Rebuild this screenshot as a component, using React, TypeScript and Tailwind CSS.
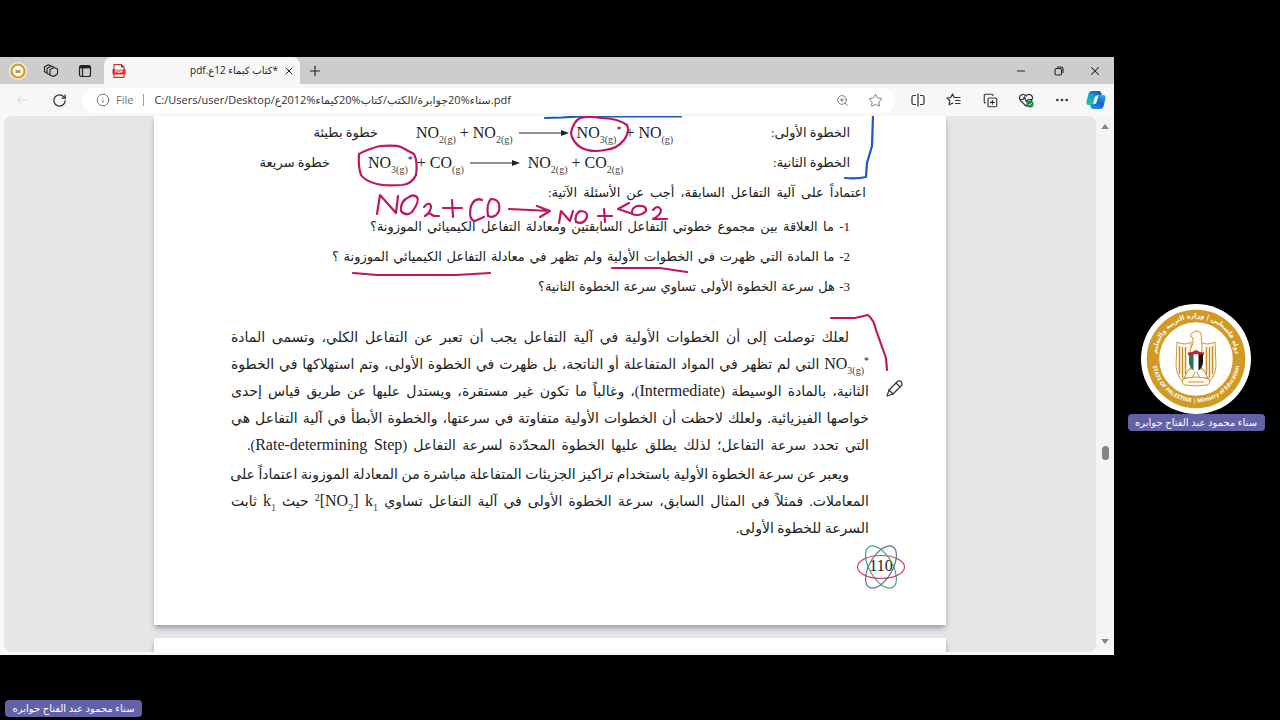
import type { ReactNode } from 'react'
import {
  ArrowLeft,
  CopyPlus,
  Ellipsis,
  Info,
  Minus,
  Plus,
  RotateCw,
  Star,
  X,
  ZoomIn,
} from 'lucide-react'

const PRESENTER = 'سناء محمود عبد الفتاح جوابره'

const questions = [
  { text: '1- ما العلاقة بين مجموع خطوتي التفاعل السابقتين ومعادلة التفاعل الكيميائي الموزونة؟', width: 'w-[480px]' },
  { text: '2- ما المادة التي ظهرت في الخطوات الأولية ولم تظهر في معادلة التفاعل الكيميائي الموزونة ؟', width: 'w-[518px]' },
  { text: '3- هل سرعة الخطوة الأولى تساوي سرعة الخطوة الثانية؟', width: 'w-[312px]' },
]

function NameTag() {
  return (
    <div dir="rtl" className="w-[137px] h-[17px] rounded-sm bg-[#6362a6] text-white text-[10px] leading-4 text-center whitespace-nowrap">
      {PRESENTER}
    </div>
  )
}

function IconButton({ label, className = '', children }: { label: string; className?: string; children: ReactNode }) {
  return (
    <button type="button" aria-label={label} className={`flex items-center justify-center h-6 shrink-0 ${className}`}>
      {children}
    </button>
  )
}

function Emblem({ className }: { className: string }) {
  return (
    <svg viewBox="0 0 110 110" className={className}>
      <defs>
        <path id="ringTop" d="M18 67 A39.500 39.500 0 1 1 92 67" />
        <path id="ringBottom" d="M12 45 A44 44 0 1 0 98 45" />
      </defs>
      <circle cx="55" cy="55" r="55" fill="#fff" />
      <circle cx="55" cy="55" r="43" fill="none" stroke="#d29a22" strokeWidth="12.500" />
      <text fill="#fff" fontSize="6.400" fontFamily="DejaVu Sans, sans-serif" fontWeight="700" textAnchor="middle" direction="rtl">
        <textPath href="#ringTop" startOffset="50%">دولة فلسطين | وزارة التربية والتعليم</textPath>
      </text>
      <text fill="#fff" fontSize="5.600" fontFamily="Open Sans, sans-serif" fontWeight="700" textAnchor="middle">
        <textPath href="#ringBottom" startOffset="50%">STATE OF PALESTINE | Ministry of Education</textPath>
      </text>
      {/* eagle */}
      <g fill="#fffaf0" stroke="#c08e25" strokeWidth="0.9" strokeLinejoin="round">
        <path d="M50 38 Q44 42 36 38 L35 62 Q36 72 41 77 L51 62 Z" />
        <path d="M60 38 Q66 42 74 38 L75 62 Q74 72 69 77 L59 62 Z" />
        <path d="M38.500 42 V70 M41.500 43 V74 M44.500 43 V70 M71.500 42 V70 M68.500 43 V74 M65.500 43 V70" strokeWidth="1.400" fill="none" />
        <path d="M49 46 Q53 40 52 34 L49 32 L51 29 Q55 25 60 29 Q61 37 61 46 L58 66 H52 Z" />
        <path d="M48 65 L43 74 H51 L55 66 L59 74 H67 L62 65 Z" />
        <path d="M42 75 Q55 71 68 75 Q70 80 66 81 Q55 83 44 81 Q40 80 42 75 Z" />
        <path d="M47 78 H63" fill="none" />
      </g>
      <path d="M48 49 H62 V58 Q61 65 55 68 Q49 65 48 58 Z" fill="#fff" />
      <path d="M48 49 H52.500 V66.500 Q48 63 48 58 Z" fill="#26735a" />
      <path d="M57.500 49 H62 V58 Q62 63 57.500 66.500 Z" fill="#161616" />
      <path d="M47 48.500 Q51 48.500 55 46 Q59 48.500 63 48.500 V51 L55 50 L47 51 Z" fill="#c91f2b" />
    </svg>
  )
}

function Ink() {
  return (
    <svg viewBox="154 116 792 509" className="absolute inset-0 w-full h-full pointer-events-none" fill="none" strokeWidth="2.200" strokeLinecap="round" strokeLinejoin="round">
      <g stroke="#1c58bd">
        <path d="M545 118 L562 117.500 L580 116.500 M580 116.500 H681" />
        <path d="M873 116 L872 146 L867 163 L866 177 Q858 179 845 178" />
      </g>
      <g stroke="#bd1762">
        <path d="M580 118 Q573 122 571 133 Q572 141 580 147 Q590 153 605 150 Q617 149 624 140 Q630 132 627 125 Q617 118 601 118 Q590 116 580 118 Z" />
        <path d="M359 154 Q368 149 380 146 Q396 145 401 147 L414 154 Q418 162 416 175 Q412 184 402 185 Q384 186 377 184 Q365 181 361 175 Q358 167 359 154 Z" />
        <path d="M377 214 L380 195 L396 213 L398 196" />
        <path d="M409 197 Q400 201 401 211 Q406 217 412 212 Q420 201 417 197 Q413 194 409 197 Z" />
        <path d="M424 207 Q429 201 431 206 Q431 212 425 216 M425 216 L429 213 L434 216 L439 216" />
        <path d="M443 208 H462 M452 200 L453 217" />
        <path d="M482 200 Q475 197 471 206 Q468 220 475 221 L484 217" />
        <path d="M491 199 Q486 204 488 216 Q495 219 499 211 Q501 199 491 199 Z" />
        <path d="M509 209 L550 211 M537 206 L550 211 L540 217" />
        <path d="M559 223 L561 211 L570 221 L573 211" />
        <path d="M580 211 Q574 215 576 222 Q584 225 587 217 Q588 211 580 211 Z" />
        <path d="M598 216 H612 M604 209 L605 222" />
        <path d="M629 203 L618 209 L630 213" />
        <path d="M637 206 Q631 208 632 214 Q640 217 646 211 Q647 205 637 206 Z" />
        <path d="M653 210 Q658 204 661 210 Q661 215 653 219 L667 219" />
        <path d="M612 268 H660 Q673 270 687 272" />
        <path d="M353 273 L365 274 L377 275 H456 L490 273" />
        <path d="M831 318 L855 318 Q864 316 868 315 Q874 320 876 330 L886 358 L887 370" />
      </g>
      {/* pen cursor */}
      <g stroke="#333" strokeWidth="1.200" fill="#fff">
        <path d="M887 396 L889 390 L898 381 Q902 380 902 385 L893 394 Z" />
        <path d="M889 390 L893 394 M896 383 L900 387" />
      </g>
    </svg>
  )
}

function Sub({ children }: { children: ReactNode }) {
  return <sub className="text-[10px] leading-none bottom-[-5px] text-[#444]">{children}</sub>
}

function Species({ name, sub, star }: { name: string; sub: string; star?: boolean }) {
  return (
    <span>
      {name}
      <Sub>{sub}</Sub>
      {star && <sup className="text-[10px] leading-none">*</sup>}
    </span>
  )
}

function Arrow() {
  return (
    <svg viewBox="0 0 50 6" className="w-[50px] h-1.5 ml-0.5 mr-1 self-center">
      <path d="M0 3 H44" stroke="#222" strokeWidth="1" />
      <path d="M42 0 L50 3 L42 6 Z" fill="#222" />
    </svg>
  )
}

function Line({ children, indent = false }: { children: ReactNode; indent?: boolean }) {
  return (
    <p className={`h-[27px] leading-[27px] whitespace-nowrap [text-align-last:justify] ${indent ? 'pr-5' : ''}`}>
      {children}
    </p>
  )
}

function Latin({ children }: { children: ReactNode }) {
  return <bdi dir="ltr" className="text-base leading-none">{children}</bdi>
}

function DocumentPage() {
  return (
    <article dir="rtl" className="relative w-[792px] h-[509px] shrink-0 bg-white shadow-md shadow-gray-400 overflow-hidden pt-0.5 text-[13px] text-[#222] font-['Liberation_Serif','DejaVu_Sans',serif]">
      <div dir="ltr" className="flex items-center h-[30px] gap-[38px] pr-24">
        <span className="w-[224px] text-right">خطوة بطيئة</span>
        <div className="flex items-baseline gap-1 text-base leading-5">
          <Species name="NO" sub="2(g)" />+<Species name="NO" sub="2(g)" />
          <Arrow />
          <Species name="NO" sub="3(g)" star />+<Species name="NO" sub="(g)" />
        </div>
        <span dir="rtl" className="ml-auto">الخطوة الأولى:</span>
      </div>
      <div dir="ltr" className="flex items-center h-[30px] gap-[38px] pr-24">
        <span className="w-[176px] text-right">خطوة سريعة</span>
        <div className="flex items-baseline gap-1 text-base leading-5">
          <Species name="NO" sub="3(g)" star />+<Species name="CO" sub="(g)" />
          <Arrow />
          <Species name="NO" sub="2(g)" />+<Species name="CO" sub="2(g)" />
        </div>
        <span dir="rtl" className="ml-auto">الخطوة الثانية:</span>
      </div>

      <p className="h-[30px] leading-[30px] mr-20 w-[318px] whitespace-nowrap [text-align-last:justify]">
        اعتماداً على آلية التفاعل السابقة، أجب عن الأسئلة الآتية:
      </p>
      <div className="mt-1 mr-24">
        {questions.map((q) => (
          <p key={q.text} className={`h-[30px] leading-[30px] whitespace-nowrap [text-align-last:justify] ${q.width}`}>
            {q.text}
          </p>
        ))}
      </div>

      <div className="mt-[22px] mx-[77px] text-sm">
        <Line indent>لعلك توصلت إلى أن الخطوات الأولية في آلية التفاعل يجب أن تعبر عن التفاعل الكلي، وتسمى المادة</Line>
        <Line>
          <Latin><Species name="NO" sub="3(g)" star /></Latin> التي لم تظهر في المواد المتفاعلة أو الناتجة، بل ظهرت في الخطوة الأولى، وتم استهلاكها في الخطوة
        </Line>
        <Line>الثانية، بالمادة الوسيطة (<Latin>Intermediate</Latin>)، وغالباً ما تكون غير مستقرة، ويستدل عليها عن طريق قياس إحدى</Line>
        <Line>خواصها الفيزيائية. ولعلك لاحظت أن الخطوات الأولية متفاوتة في سرعتها، والخطوة الأبطأ في آلية التفاعل هي</Line>
        <p className="h-[27px] leading-[27px] w-[622px] whitespace-nowrap [text-align-last:justify]">
          التي تحدد سرعة التفاعل؛ لذلك يطلق عليها الخطوة المحدّدة لسرعة التفاعل (<Latin>Rate-determining Step</Latin>).
        </p>
      </div>
      <div className="mt-0.5 mx-[77px] text-sm">
        <Line indent>ويعبر عن سرعة الخطوة الأولية باستخدام تراكيز الجزيئات المتفاعلة مباشرة من المعادلة الموزونة اعتماداً على</Line>
        <Line>
          المعاملات. فمثلاً في المثال السابق، سرعة الخطوة الأولى في آلية التفاعل تساوي{' '}
          <Latin><sup className="text-[10px] leading-none">2</sup>[NO<Sub>2</Sub>] k<Sub>1</Sub></Latin> حيث{' '}
          <Latin>k<Sub>1</Sub></Latin> ثابت
        </Line>
        <p className="h-[27px] leading-[27px]">السرعة للخطوة الأولى.</p>
      </div>

      <div className="relative w-12 h-12 mr-[41px] flex items-center justify-center text-base">
        <svg viewBox="0 0 48 48" className="absolute inset-0" fill="none" strokeWidth="1.200">
          <ellipse cx="24" cy="25" rx="23.500" ry="11.500" stroke="#e0405f" />
          <ellipse cx="24" cy="25" rx="23.500" ry="11.500" stroke="#39a58b" transform="rotate(60 24 25)" />
          <ellipse cx="24" cy="25" rx="23.500" ry="11.500" stroke="#5b7296" transform="rotate(120 24 25)" />
        </svg>
        <span>110</span>
      </div>
      <Ink />
    </article>
  )
}

function TabStrip() {
  return (
    <div className="flex h-[27px] bg-[#cdcdcd] text-[#222]">
      <div className="flex items-center w-[104px] pl-[9px] gap-4">
        <svg viewBox="0 0 18 18" className="w-[18px] h-[18px]">
          <circle cx="9" cy="9" r="9" fill="#f8efd7" />
          <circle cx="9" cy="9" r="6.500" fill="#fff" stroke="#d29a22" strokeWidth="2.200" />
          <path d="M6.500 7.500 L9 8.500 L11.500 7.500 V11 H6.500 Z" fill="#b59655" />
        </svg>
        <IconButton label="Workspaces" className="w-4">
          <svg viewBox="0 0 16 16" className="w-4 h-4" fill="none" stroke="currentColor" strokeWidth="1.100" strokeLinejoin="round">
            <path d="M7 6.500 L11 4.500 L14.500 6 V11 L10.500 13.500 L7 12 Z" />
            <path d="M7 11.800 L4 10.500 V5.200 L8.500 3 L11 4.200" />
            <path d="M4 9.800 L1.500 8.800 V3.800 L5.500 1.800 L8 3" />
          </svg>
        </IconButton>
        <IconButton label="Tab actions" className="w-4 ml-0.5">
          <svg viewBox="0 0 14 14" className="w-3.5 h-3.5" fill="none" stroke="currentColor" strokeWidth="1.200">
            <rect x="1.500" y="1.500" width="11" height="11" rx="2" />
            <path d="M4.500 4 V12.500" />
            <path d="M2 3 H12" strokeWidth="2.800" />
          </svg>
        </IconButton>
      </div>
      <div className="flex items-center w-[196px] rounded-t-lg bg-[#f7f7f7] pl-2 pr-1">
        <svg viewBox="0 0 14 14" className="w-3.5 h-3.5">
          <path d="M2 0.600 H9.500 L12 3.200 V13.400 H2 Z" fill="#fff" stroke="#c33" strokeWidth="1.100" />
          <path d="M9 0.600 V3.600 H12 Z" fill="#444" />
          <rect x="0.500" y="5" width="13" height="5.500" rx="0.500" fill="#dc2b2b" />
          <text x="7" y="9.300" fill="#fff" fontSize="4.500" fontWeight="700" fontFamily="Open Sans, sans-serif" textAnchor="middle">PDF</text>
        </svg>
        <span dir="rtl" className="ml-auto mr-1 text-[10px]">*كتاب كيماء 12ع.pdf</span>
        <IconButton label="Close tab" className="w-3.5">
          <X className="w-3 h-3" strokeWidth={2} />
        </IconButton>
      </div>
      <IconButton label="New tab" className="ml-[7px] w-4 self-center">
        <Plus className="w-4 h-4" strokeWidth={1.7} />
      </IconButton>
      <div className="ml-auto flex items-center gap-5 pr-3">
        <IconButton label="Minimize" className="w-[18px]">
          <Minus className="w-3 h-3" strokeWidth={2} />
        </IconButton>
        <IconButton label="Restore" className="w-[18px]">
          <svg viewBox="0 0 10 10" className="w-2.5 h-2.5" fill="none" stroke="currentColor" strokeWidth="1.100">
            <rect x="1" y="2.500" width="6.500" height="6.500" rx="1.500" />
            <path d="M3 1 H7 Q9 1 9 3 V7" />
          </svg>
        </IconButton>
        <IconButton label="Close" className="w-3.5">
          <X className="w-3.5 h-3.5" strokeWidth={1.8} />
        </IconButton>
      </div>
    </div>
  )
}

function Toolbar() {
  return (
    <div className="flex items-center h-8 bg-[#f7f7f7] text-[#333] pl-3.5 pr-2">
      <IconButton label="Back" className="w-4 text-gray-300">
        <ArrowLeft className="w-4 h-4" strokeWidth={1.5} />
      </IconButton>
      <IconButton label="Refresh" className="w-4 ml-[21px]">
        <RotateCw className="w-[15px] h-[15px]" strokeWidth={2} />
      </IconButton>
      <div className="flex flex-1 items-center h-[25px] ml-[15px] pl-3.5 pr-3 rounded-full bg-white text-[11px]">
        <Info className="w-3.5 h-3.5 text-gray-500" strokeWidth={1.6} />
        <label htmlFor="address" className="ml-1.5 text-gray-500">File</label>
        <span className="w-px h-3 mx-2.5 bg-gray-400" />
        <input
          id="address"
          readOnly
          className="flex-1 min-w-0 outline-none text-[#333]"
          value="C:/Users/user/Desktop/سناء%20جوابرة/الكتب/كتاب%20كيماء%2012ع.pdf"
        />
        <IconButton label="Zoom" className="w-3.5 text-gray-500">
          <ZoomIn className="w-[13px] h-[13px]" strokeWidth={1.7} />
        </IconButton>
        <IconButton label="Add to favorites" className="w-4 ml-[18px] text-gray-500">
          <Star className="w-[15px] h-[15px]" strokeWidth={1.5} />
        </IconButton>
      </div>
      <div className="flex items-center gap-5 ml-[15px]">
        <IconButton label="Split screen" className="w-4">
          <svg viewBox="0 0 16 16" className="w-4 h-4" fill="none" stroke="currentColor" strokeWidth="1.200">
            <path d="M6 3.500 H3.500 Q2 3.500 2 5 V11 Q2 12.500 3.500 12.500 H6 M10 3.500 H12.500 Q14 3.500 14 5 V11 Q14 12.500 12.500 12.500 H10 M8 1.500 V14.500" />
          </svg>
        </IconButton>
        <IconButton label="Favorites" className="w-4">
          <svg viewBox="0 0 16 16" className="w-4 h-4" fill="none" stroke="currentColor" strokeWidth="1.200" strokeLinejoin="round" strokeLinecap="round">
            <path d="M9 5.500 H8.200 L6.500 2 L4.800 5.500 L1 6 L3.800 8.800 L3.100 12.800 L7 11 M9 5.500 H14 M9.500 8.500 H14 M9.500 11.500 H14" />
          </svg>
        </IconButton>
        <IconButton label="Collections" className="w-4">
          <CopyPlus className="w-[15px] h-[15px]" strokeWidth={1.8} />
        </IconButton>
        <IconButton label="Browser essentials" className="w-4">
          <svg viewBox="0 0 16 16" className="w-4 h-4" fill="none" stroke="currentColor" strokeWidth="1.200" strokeLinejoin="round">
            <path d="M8 14 L2.500 8.500 Q0.500 5.500 2.500 3.500 Q5.500 1 8 4 Q10.500 1 13.500 3.500 Q15.500 5.500 13.500 8.500 Z" />
            <path d="M1.500 7.500 H5 L6.500 5 L8.500 10 L10 7.500 H14" />
            <circle cx="12" cy="12" r="3.500" fill="#16883a" stroke="none" />
            <path d="M10.500 12 L11.700 13.200 L13.600 11" stroke="#fff" strokeWidth="0.900" />
          </svg>
        </IconButton>
        <IconButton label="Settings and more" className="w-4">
          <Ellipsis className="w-4 h-4" strokeWidth={2} />
        </IconButton>
      </div>
      <IconButton label="Copilot" className="w-5 ml-4">
        <svg viewBox="0 0 20 20" className="w-5 h-5">
          <defs>
            <linearGradient id="pilotA" x1="0.700" y1="0" x2="0.200" y2="1">
              <stop offset="0" stopColor="#1554a8" />
              <stop offset="0.400" stopColor="#15a3cf" />
              <stop offset="1" stopColor="#27c3a0" />
            </linearGradient>
            <linearGradient id="pilotB" x1="0.800" y1="0" x2="0.300" y2="1">
              <stop offset="0" stopColor="#25b5e8" />
              <stop offset="0.500" stopColor="#1763d6" />
              <stop offset="1" stopColor="#1c8fe8" />
            </linearGradient>
          </defs>
          <path d="M5.500 1 H13 Q14.700 1 15.200 2.800 L16 5.500 H13 Q11 5.500 10.500 7.200 L8.600 13.500 Q8 15 6 15 H3 Q-0.300 15 0.500 11.500 L2.500 3.500 Q3.200 1 5.500 1 Z" fill="url(#pilotA)" />
          <path d="M14.500 19 H7 Q5.300 19 4.800 17.200 L4 14.500 H7 Q9 14.500 9.500 12.800 L11.400 6.500 Q12 5 14 5 H17 Q20.300 5 19.500 8.500 L17.500 16.500 Q16.800 19 14.500 19 Z" fill="url(#pilotB)" />
          <path d="M9 7 Q9.500 5.500 11 5.500 H12.500 L10.500 12.500 Q10 14 8.500 14 H7 Z" fill="#f3fbff" />
        </svg>
      </IconButton>
    </div>
  )
}

function ScrollBar() {
  return (
    <div className="flex flex-col items-center w-[18px] shrink-0 py-2 bg-[#f4f4f4] rounded-t-lg">
      <svg viewBox="0 0 8 5" className="w-2 h-[5px]"><path d="M4 0 L8 5 H0 Z" fill="#888" /></svg>
      <div className="flex-[64]" />
      <div className="w-[7px] h-3.5 rounded-full bg-[#858585]" />
      <div className="flex-[36]" />
      <svg viewBox="0 0 8 5" className="w-2 h-[5px]"><path d="M0 0 H8 L4 5 Z" fill="#888" /></svg>
    </div>
  )
}

export default function App() {
  return (
    <div className="flex h-screen bg-black font-['Open_Sans','DejaVu_Sans',sans-serif] overflow-hidden">
      <div className="flex flex-col flex-1 min-w-0 pt-[57px]">
        <main className="flex flex-col flex-1 min-h-0 bg-[#f7f7f7]">
          <TabStrip />
          <Toolbar />
          <div className="flex flex-1 min-h-0 mb-[3px]">
            <div className="flex flex-col flex-1 items-center gap-[13px] ml-1 rounded-lg bg-[#e6e6e6] overflow-hidden">
              <DocumentPage />
              <div className="w-[792px] h-24 shrink-0 bg-white shadow-md shadow-gray-400" />
            </div>
            <ScrollBar />
          </div>
        </main>
        <footer className="flex items-end h-[65px] pl-[5px] pb-[3px]">
          <NameTag />
        </footer>
      </div>
      <aside className="flex flex-col items-center justify-center w-[166px] shrink-0 pt-3.5 pr-0.5">
        <Emblem className="w-[110px] h-[110px]" />
        <NameTag />
      </aside>
    </div>
  )
}
